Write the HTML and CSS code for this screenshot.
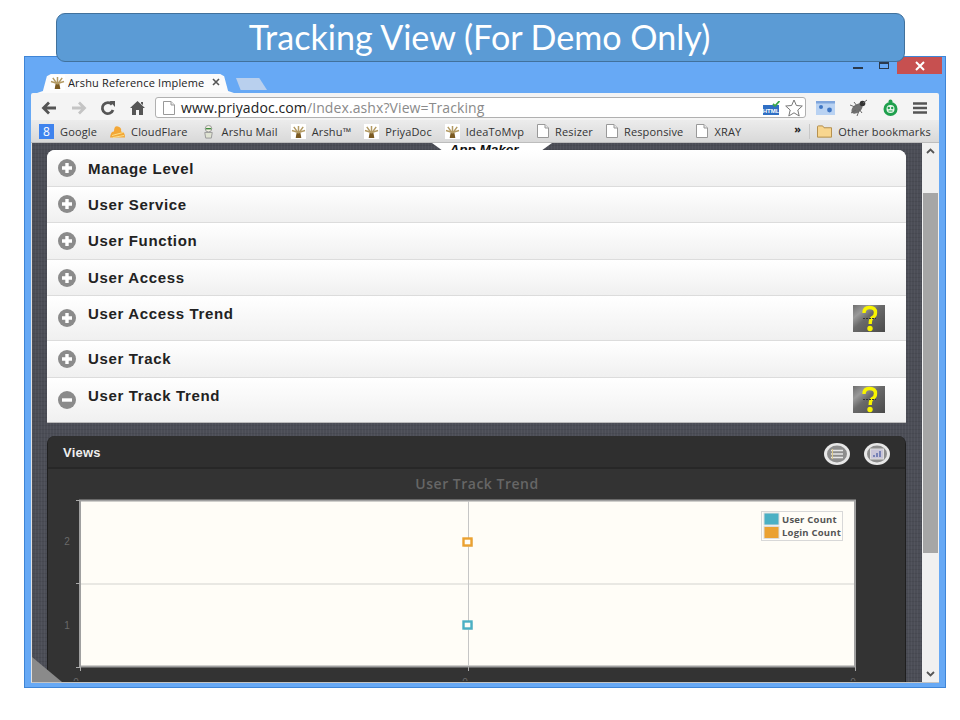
FILE: index.html
```html
<!DOCTYPE html>
<html>
<head>
    <meta charset="UTF-8">
    <title>Tracking View</title>
    <link rel="stylesheet" href="styles.css">
</head>
<body>
    <svg class="defs" width="0" height="0">
        <defs>
            <linearGradient id="helpbg" x1="0" y1="0" x2="1" y2="1">
                <stop offset="0" stop-color="#6e6e6e"/>
                <stop offset=".25" stop-color="#9a9a9a"/>
                <stop offset=".45" stop-color="#6a6a6a"/>
                <stop offset="1" stop-color="#4a4a4a"/>
            </linearGradient>
        </defs>
        <symbol id="fav" viewBox="0 0 16 16">
            <rect width="16" height="16" fill="#fff"/>
            <path d="M6 9 L10 9 L11 15 L5 15 Z" fill="#7a5a22"/>
            <path d="M8 10 L3 3 M8 10 L13 3 M8 10 L8 2 M8 9 L1 7 M8 9 L15 7" stroke="#b39a63" stroke-width="1.6" fill="none"/>
        </symbol>
        <symbol id="doc" viewBox="0 0 12 14">
            <path d="M.5 .5 H8 L11.5 4 V13.5 H.5 Z" fill="#fff" stroke="#999"/>
            <path d="M8 .5 V4 H11.5" fill="#e8e8e8" stroke="#999"/>
        </symbol>
        <symbol id="plus" viewBox="0 0 18 18">
            <circle cx="9" cy="9" r="9" fill="#8b8b8b"/>
            <path d="M9 4 V14 M4 9 H14" stroke="#fff" stroke-width="3.4"/>
        </symbol>
        <symbol id="minus" viewBox="0 0 18 18">
            <circle cx="9" cy="9" r="9" fill="#8b8b8b"/>
            <path d="M4 9 H14" stroke="#fff" stroke-width="3.4"/>
        </symbol>
        <symbol id="help" viewBox="0 0 32 27">
            <rect width="32" height="27" fill="url(#helpbg)"/>
            <path d="M11 8 Q11 2.500 16.500 2.500 Q22.500 2.500 22.500 7.500 Q22.500 11 19.500 12.500 Q17.200 14 17.200 19" fill="none" stroke="#f8f400" stroke-width="3.400"/>
            <path d="M10 13.500 H23" stroke="#333" stroke-width="1" stroke-dasharray="2 1"/>
            <circle cx="17" cy="23.500" r="2.700" fill="#f8f400"/>
        </symbol>
    </svg>

    <div class="banner">Tracking View (For Demo Only)</div>

    <div class="window">
        <div class="winbtns">
            <span class="winmin"></span>
            <span class="winmax"></span>
            <span class="winclose">
                <svg width="10" height="10" viewBox="0 0 10 10"><path d="M1 1 L9 9 M9 1 L1 9" stroke="#fff" stroke-width="2"/></svg>
            </span>
        </div>

        <div class="tabs">
            <div class="tab">
                <svg class="ico16"><use href="#fav"/></svg>
                <span class="tabtitle">Arshu Reference Impleme</span>
                <svg class="tabx" width="8" height="8" viewBox="0 0 8 8"><path d="M1 1 L7 7 M7 1 L1 7" stroke="#555" stroke-width="1.600"/></svg>
            </div>
            <div class="newtab"></div>
        </div>

        <div class="toolbar">
            <svg class="navbtn" width="16" height="14" viewBox="0 0 16 14"><path d="M15 7 H3 M8 1.500 L2.500 7 L8 12.500" fill="none" stroke="#555" stroke-width="2.800"/></svg>
            <svg class="navbtn" width="16" height="14" viewBox="0 0 16 14"><path d="M1 7 H13 M8 1.500 L13.500 7 L8 12.500" fill="none" stroke="#c4c4c4" stroke-width="2.800"/></svg>
            <svg class="navbtn" width="16" height="16" viewBox="0 0 16 16"><path d="M13 10 A5.500 5.500 0 1 1 12 4.500" fill="none" stroke="#555" stroke-width="2.800"/><path d="M9.500 1 H15 V7 Z" fill="#555"/></svg>
            <svg class="navbtn" width="15" height="14" viewBox="0 0 15 14"><path d="M7.500 0 L15 7 H13 V14 H9 V9 H6 V14 H2 V7 H0 Z M11 1 H13 V4 L11 2.500 Z" fill="#555"/></svg>
            <div class="omnibox">
                <svg class="docico"><use href="#doc"/></svg>
                <span class="url">www.priyadoc.com<span class="urlpath">/Index.ashx?View=Tracking</span></span>
                <svg class="htmlico" width="17" height="14" viewBox="0 0 17 14"><rect y="4" width="16" height="10" fill="#2f6fc4"/><text x="8" y="11.500" class="htmltxt" text-anchor="middle">HTML</text><path d="M10 3 L12 5 L16.500 0" fill="none" stroke="#3aa648" stroke-width="1.800"/></svg>
                <svg class="star" width="18" height="18" viewBox="0 0 18 18"><path d="M9 1 L11.400 6.500 L17.300 7 L12.800 11 L14.200 17 L9 13.800 L3.800 17 L5.200 11 L.7 7 L6.600 6.500 Z" fill="#fff" stroke="#777"/></svg>
            </div>
            <div class="exts">
                <svg width="19" height="14" viewBox="0 0 19 14"><rect width="19" height="14" fill="#b9d2f2"/><rect y="0" width="19" height="2.500" fill="#7fa5dc"/><circle cx="5" cy="6" r="2" fill="#3f76c4"/><circle cx="13.500" cy="9" r="2.400" fill="#3f76c4"/></svg>
                <svg width="19" height="17" viewBox="0 0 19 17"><ellipse cx="8" cy="9.500" rx="4" ry="6.500" transform="rotate(50 8 9.500)" fill="#707070"/><circle cx="13.500" cy="4.500" r="2.800" fill="#333"/><path d="M1 6 L6 8 M2 14 L7 11 M8 17 L10 12 M5 3 L8 7 M13 14 L10 10 M18 1 L14 4" stroke="#666"/></svg>
                <svg width="17" height="17" viewBox="0 0 17 17"><circle cx="8.500" cy="10" r="7" fill="#1fa04d"/><circle cx="8.500" cy="2.500" r="2" fill="#1fa04d"/><circle cx="8.500" cy="10" r="4" fill="#e8f6ec"/><circle cx="6.800" cy="9" r="1.200" fill="#1fa04d"/><circle cx="10.200" cy="9" r="1.200" fill="#1fa04d"/><path d="M6.500 12 H10.500" stroke="#1fa04d"/></svg>
                <svg width="14" height="12" viewBox="0 0 14 12"><path d="M0 1.500 H14 M0 6 H14 M0 10.500 H14" stroke="#555" stroke-width="2.400"/></svg>
            </div>
        </div>

        <div class="bookmarks">
            <div class="bm"><span class="gicon">8</span>Google</div>
            <div class="bm"><svg class="ico16" viewBox="0 0 15 14"><path d="M0 13 Q1 6 4 7 Q4 1 8 2 Q12 3 11 7 Q15 7 15 13 Z" fill="#f3a736"/><path d="M2 11 L13 8 M3 13 L14 11" stroke="#fbe08a"/></svg>CloudFlare</div>
            <div class="bm"><svg class="ico16" viewBox="0 0 16 16"><circle cx="8" cy="5" r="3.500" fill="#f2efe2" stroke="#999"/><path d="M4 9 H12 L11 15 H5 Z" fill="#dfe3d2" stroke="#999"/><path d="M5 5 H11" stroke="#3d8a3d" stroke-width="1.500"/></svg>Arshu Mail</div>
            <div class="bm"><svg class="ico16"><use href="#fav"/></svg>Arshu™</div>
            <div class="bm"><svg class="ico16"><use href="#fav"/></svg>PriyaDoc</div>
            <div class="bm"><svg class="ico16"><use href="#fav"/></svg>IdeaToMvp</div>
            <div class="bm"><svg class="icodoc"><use href="#doc"/></svg>Resizer</div>
            <div class="bm"><svg class="icodoc"><use href="#doc"/></svg>Responsive</div>
            <div class="bm"><svg class="icodoc"><use href="#doc"/></svg>XRAY</div>
            <div class="bmmore">»</div>
            <div class="bmother"><svg class="ico16" viewBox="0 0 16 13"><path d="M.5 12.500 V1.500 Q.5 .5 1.500 .5 H6 L7.500 2.500 H15.500 V12.500 Z" fill="#f8d68f" stroke="#b08a45"/></svg>Other bookmarks</div>
        </div>

        <div class="content">
            <div class="page">
                <div class="appmaker"><span>App Maker</span></div>

                <div class="accordion">
                    <div class="row first"><svg class="rowicon"><use href="#plus"/></svg><span class="rowname">Manage Level</span></div>
                    <div class="row"><svg class="rowicon"><use href="#plus"/></svg><span class="rowname">User Service</span></div>
                    <div class="row"><svg class="rowicon"><use href="#plus"/></svg><span class="rowname">User Function</span></div>
                    <div class="row"><svg class="rowicon"><use href="#plus"/></svg><span class="rowname">User Access</span></div>
                    <div class="row tall"><svg class="rowicon"><use href="#plus"/></svg><span class="rowname">User Access Trend</span><svg class="helpicon"><use href="#help"/></svg></div>
                    <div class="row"><svg class="rowicon"><use href="#plus"/></svg><span class="rowname">User Track</span></div>
                    <div class="row tall last"><svg class="rowicon"><use href="#minus"/></svg><span class="rowname">User Track Trend</span><svg class="helpicon"><use href="#help"/></svg></div>
                </div>

                <div class="views">
                    <div class="viewshead">
                        <span class="viewstitle">Views</span>
                        <svg class="roundbtn" viewBox="0 0 26 22"><ellipse cx="13" cy="11" rx="13" ry="11" fill="#e8e8e8"/><ellipse cx="13" cy="11" rx="10" ry="8.500" fill="#8d8d8d"/><path d="M7 7.500 H19 M7 11 H19 M7 14.500 H19" stroke="#e6e6e6" stroke-width="1.600"/><path d="M8.500 6 V16" stroke="#d9c78a"/></svg>
                        <svg class="roundbtn" viewBox="0 0 26 22"><ellipse cx="13" cy="11" rx="13" ry="11" fill="#e8e8e8"/><ellipse cx="13" cy="11" rx="10" ry="8.500" fill="#8d8d8d"/><rect x="6.500" y="6" width="13" height="10" fill="#c9c5d8" stroke="#ddd"/><path d="M10 14 V12 M13 14 V10 M16 14 V8" stroke="#5566aa" stroke-width="1.400"/></svg>
                    </div>
                    <svg class="chart" viewBox="47 469 859 212">
                        <text x="477" y="489" class="charttitle" text-anchor="middle">User Track Trend</text>
                        <rect x="80" y="500.500" width="775" height="166" fill="#fffdf7" stroke="#a0a0a0" stroke-width="2"/>
                        <path d="M81 584 H854" stroke="#e2e1dc" stroke-width="1.500"/>
                        <path d="M468.500 501 V666" stroke="#c6c6c6"/>
                        <path d="M76 583.500 H80 M76 667.500 H80 M76 500.500 H80 M80.500 667 V671 M468.500 667 V671 M855.500 667 V671" stroke="#aaa"/>
                        <text x="67" y="545" class="axis" text-anchor="middle">2</text>
                        <text x="67" y="629" class="axis" text-anchor="middle">1</text>
                        <text x="76" y="686" class="axis" text-anchor="middle">0</text>
                        <text x="465" y="686" class="axis" text-anchor="middle">0</text>
                        <text x="853" y="686" class="axis" text-anchor="middle">0</text>
                        <rect x="464" y="539" width="9" height="8" fill="#ddd" opacity=".7"/>
                        <rect x="463.500" y="538.500" width="8" height="7" fill="#fffdf7" stroke="#eba130" stroke-width="2.400"/>
                        <rect x="464" y="622" width="9" height="8" fill="#ddd" opacity=".7"/>
                        <rect x="463.500" y="621.500" width="8" height="7" fill="#fffdf7" stroke="#4bb0c4" stroke-width="2.400"/>
                        <rect x="761.500" y="511.500" width="81" height="29" fill="#fffdf7" stroke="#d8d8d8"/>
                        <rect x="764" y="513" width="15" height="12" fill="#4bb0c4" stroke="#ddd"/>
                        <rect x="764" y="526.500" width="15" height="12" fill="#eba130" stroke="#ddd"/>
                        <text x="782" y="522.500" class="legend">User Count</text>
                        <text x="782" y="536" class="legend">Login Count</text>
                    </svg>
                </div>
                <div class="corner"></div>
            </div>
            <div class="scrollbar">
                <svg width="9" height="6" viewBox="0 0 9 6"><path d="M1 5 L4.500 1.500 L8 5" fill="none" stroke="#555" stroke-width="1.800"/></svg>
                <div class="thumb"></div>
                <svg width="9" height="6" viewBox="0 0 9 6"><path d="M1 1 L4.500 4.500 L8 1" fill="none" stroke="#555" stroke-width="1.800"/></svg>
            </div>
        </div>
    </div>
</body>
</html>
```
FILE: styles.css
```css
html,body{margin: 0;padding: 0;background-color: #fff;}
body{width: 960px;height: 720px;overflow: hidden;font-family: "Liberation Sans",sans-serif;}
.defs{position: absolute;}

.banner{position: relative;z-index: 2;box-sizing: border-box;width: 849px;height: 49px;margin: 13px 0 0 56px;padding-right: 2px;background-color: #5b9bd5;border: 1px solid #41719c;border-radius: 9px;color: #fff;font-family: "Lato",sans-serif;font-size: 34.1px;line-height: 46px;text-align: center;}

.window{position: relative;box-sizing: border-box;width: 922px;height: 632px;margin: -6px 0 0 24px;padding: 17px 6px 5px;background-color: #67a9f5;border: 1px solid #3f85d6;}
.winbtns{position: absolute;top: 0;right: 3px;display: flex;align-items: flex-start;}
.winmin{width: 10px;height: 2px;margin: 10px 16px 0 0;background-color: #2b3a4d;}
.winmax{box-sizing: border-box;width: 10px;height: 7px;margin: 5px 8px 0 0;border: 1px solid #2b3a4d;border-top-width: 2px;}
.winclose{display: flex;align-items: center;justify-content: center;width: 45px;height: 17px;background-color: #c75050;}

.tabs{display: flex;align-items: flex-end;height: 19px;padding-left: 6px;}
.tab{display: flex;align-items: center;width: 197px;height: 19px;padding: 0 0 3px 13px;box-sizing: border-box;background-color: #fbfbfb;clip-path: polygon(0 100%,3% 90%,5% 12%,7% 0,93% 0,95% 12%,97% 90%,100% 100%);font-family: "Open Sans",sans-serif;font-size: 11px;letter-spacing: .15px;color: #222;}
.ico16{flex: none;width: 15px;height: 15px;}
.tabtitle{width: 136px;margin-left: 3px;overflow: hidden;white-space: nowrap;}
.tabx{margin-left: 8px;}
.newtab{width: 31px;height: 12px;margin: 0 0 3px 2px;background-color: #b9d0ee;clip-path: polygon(0 0,75% 0,100% 100%,15% 100%);}

.toolbar{display: flex;align-items: center;box-sizing: border-box;height: 27px;padding: 2px 0 0 10px;background-color: #f4f4f4;border-radius: 2px 2px 0 0;}
.navbtn{flex: none;margin-right: 13.5px;}
.omnibox{display: flex;align-items: center;box-sizing: border-box;width: 651px;height: 21px;margin-left: -3px;padding: 0 2px 0 7px;background-color: #fff;border: 1px solid #b0b0b0;border-radius: 3px;}
.docico{width: 12px;height: 14px;flex: none;}
.url{flex: 1;margin-left: 6px;font-family: "Open Sans",sans-serif;font-size: 14px;letter-spacing: .1px;color: #222;white-space: nowrap;}
.urlpath{color: #8a8a8a;}
.htmlico{margin-right: 5px;}
.htmltxt{font-family: "Liberation Sans",sans-serif;font-size: 6px;font-weight: bold;fill: #fff;}
.exts{display: flex;align-items: center;gap: 14px;margin-left: 10px;}

.bookmarks{display: flex;align-items: center;height: 23px;padding-left: 8px;background: linear-gradient(#ececec,#d9d9d9);border-bottom: 1px solid #bdbdbd;box-sizing: border-box;font-family: "Open Sans",sans-serif;font-size: 11px;letter-spacing: .15px;color: #333;white-space: nowrap;}
.bm{display: flex;align-items: center;gap: 6px;margin-right: 13px;}
.gicon{display: block;width: 15px;height: 15px;background-color: #3f83ee;color: #fff;font-size: 12px;line-height: 15px;text-align: center;}
.icodoc{width: 12px;height: 14px;flex: none;}
.bmmore{margin: -5px 0 0 40px;font-weight: bold;color: #222;}
.bmother{display: flex;align-items: center;gap: 6px;margin-left: 8px;padding-left: 7px;border-left: 1px solid #c8c8c8;}

.content{display: flex;box-sizing: border-box;height: 540px;overflow: hidden;background-color: #4a4c55;border-left: 1px solid #e2e2e2;border-bottom: 1px solid #c4c4c4;}
.page{position: relative;flex: 1;box-sizing: border-box;padding: 7px 16px 0 15px;overflow: hidden;background-color: #4b4d56;background-image: repeating-linear-gradient(90deg,rgba(255,255,255,.04) 0 1px,transparent 1px 3px),repeating-linear-gradient(0deg,rgba(0,0,0,.07) 0 1px,transparent 1px 4px);}
.appmaker{position: absolute;top: 0;left: 400px;box-sizing: border-box;width: 120px;height: 7px;padding-right: 16px;overflow: hidden;background-color: #fff;clip-path: polygon(0 0,100% 0,92% 100%,8% 100%);font-size: 13.5px;font-weight: bold;font-style: italic;line-height: 14px;text-align: center;color: #111;}

.accordion{background-color: #fff;border-radius: 8px 8px 0 0;margin-bottom: 13px;overflow: hidden;}
.row{display: flex;box-sizing: border-box;height: 36.6px;padding: 0 21px 0 11px;background: linear-gradient(#fff,#f0f0f0);border-bottom: 1px solid #dcdcdc;}
.row.tall{height: 45px;}
.row.last{border-bottom: 1px solid #bbb;}
.rowicon{flex: none;align-self: center;width: 18px;height: 18px;}
.rowname{flex: 1;margin-left: 12px;padding-top: 9px;font-size: 15px;font-weight: bold;line-height: 18px;letter-spacing: .65px;color: #222;}
.row.first .rowname{padding-top: 10px;}
.helpicon{flex: none;align-self: center;width: 32px;height: 27px;}

.views{height: 260px;background-color: #333;border-radius: 8px 8px 0 0;border-left: 1px solid #1f1f1f;border-right: 1px solid #1f1f1f;margin: 0;overflow: hidden;}
.viewshead{display: flex;align-items: center;gap: 14px;box-sizing: border-box;height: 33px;padding: 3px 15px 0 15px;background-color: #2f2f2f;border-bottom: 2px solid #272727;}
.viewstitle{flex: 1;font-size: 13px;font-weight: bold;letter-spacing: .2px;color: #eee;}
.roundbtn{width: 26px;height: 22px;margin-top: 3px;}
.chart{display: block;width: 859px;height: 212px;margin-left: -1px;}
.charttitle{font-family: "Open Sans",sans-serif;font-size: 14px;font-weight: 600;letter-spacing: .5px;fill: #666;}
.axis{font-family: "Liberation Sans",sans-serif;font-size: 10px;fill: #6a6a6a;}
.legend{font-family: "Open Sans",sans-serif;font-size: 9.5px;font-weight: bold;letter-spacing: .2px;fill: #555;}
.corner{position: absolute;left: 0;bottom: 0;width: 30px;height: 25px;background-color: #8a8a8a;clip-path: polygon(0 0,0 100%,100% 100%);}

.scrollbar{display: flex;flex-direction: column;align-items: center;width: 17px;background-color: #f0f0f0;flex: none;}
.scrollbar svg{flex: none;margin: 5px 0;}
.thumb{width: 15px;height: 360px;margin: 34px 0 auto;background-color: #a6a6a6;}
```
